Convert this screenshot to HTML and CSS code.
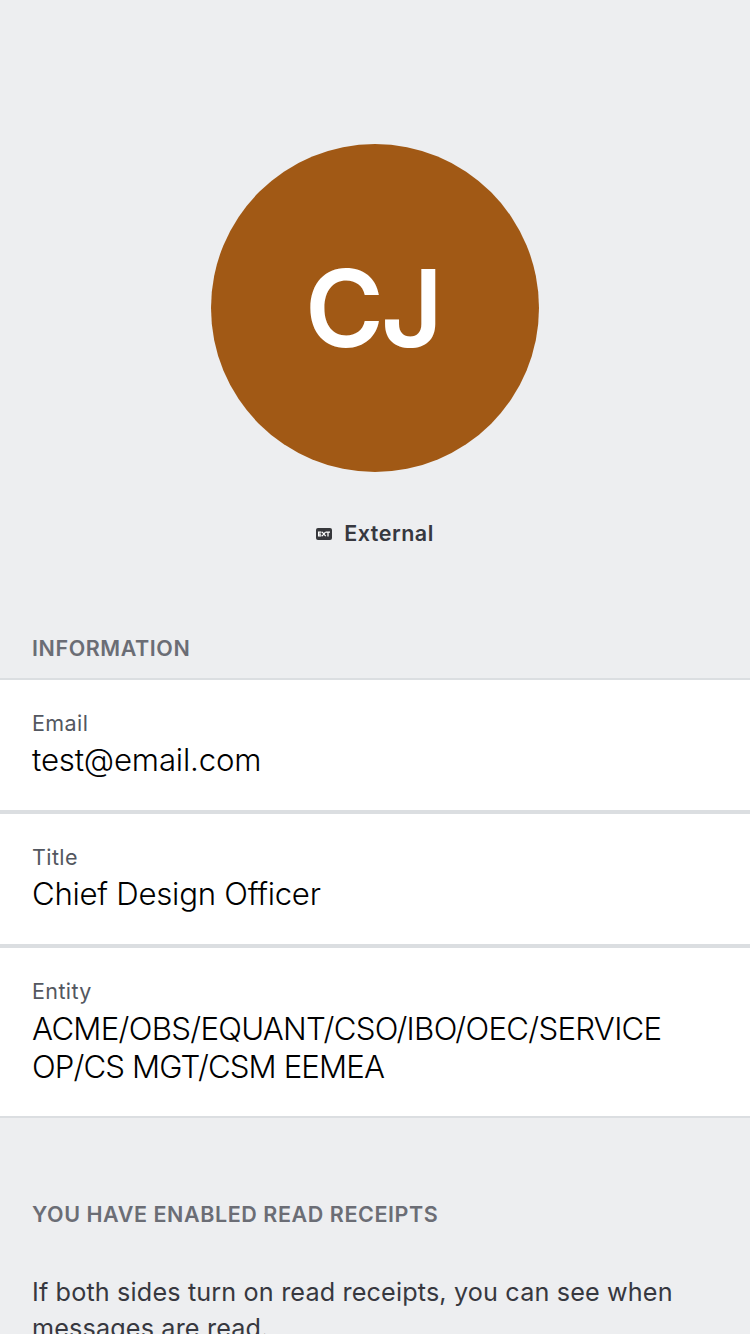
FILE: index.html
```html
<!DOCTYPE html>
<html lang="en">
<head>
<meta charset="utf-8">
<title>Profile</title>
<link rel="stylesheet" href="styles.css">
</head>
<body>
<main class="profile">
  <header class="hero">
    <div class="avatar"><span class="initials">CJ</span></div>
    <div class="status">
      <svg class="ext-icon" viewBox="0 0 16 12" aria-hidden="true">
        <rect width="16" height="12" rx="2" fill="#37383c"/>
        <path d="M5.4 4.1H2.6V7.9H5.4M2.6 6H5.1M6 3.9L9.7 8.1M9.7 3.9L6 8.1M10 4.1H14M12 4.1V8.4" fill="none" stroke="#fff" stroke-width="1.25"/>
      </svg>
      <span class="status-label">External</span>
    </div>
  </header>
  <section>
    <h2 class="heading">INFORMATION</h2>
    <dl class="fields">
      <div class="field"><dt class="label">Email</dt><dd class="value"><span class="email">test@email.com</span></dd></div>
      <div class="field"><dt class="label">Title</dt><dd class="value"><span class="job">Chief Design Officer</span></dd></div>
      <div class="field field-entity"><dt class="label">Entity</dt><dd class="value"><span class="entity">ACME/OBS/EQUANT/CSO/IBO/OEC/SERVICE</span><br><span class="entity-end">OP/CS MGT/CSM EEMEA</span></dd></div>
    </dl>
  </section>
  <section class="receipts">
    <h2 class="heading">YOU HAVE ENABLED READ RECEIPTS</h2>
    <p class="note">If both sides turn on read receipts, you can see when<br>messages are read.</p>
  </section>
</main>
</body>
</html>
```
FILE: styles.css
```css
* { box-sizing: border-box; }
body {
  margin: 0;
  background: #edeef0;
  font-family: Inter, "Liberation Sans", sans-serif;
  color: #37383f;
}
.profile { height: 1334px; overflow: hidden; }
.hero {
  height: 634px;
  padding-top: 144px;
  display: flex;
  flex-direction: column;
  align-items: center;
}
.avatar {
  width: 328px;
  height: 328px;
  border-radius: 50%;
  background: #a15915;
  color: #fff;
  display: flex;
  align-items: center;
  justify-content: center;
}
.initials {
  padding-right: 5px;
  font-size: 107px;
  font-weight: 600;
  line-height: 130px;
  letter-spacing: -3px;
}
.status {
  margin-top: 48px;
  height: 28px;
  display: flex;
  align-items: center;
  gap: 12px;
}
.ext-icon { width: 16px; height: 12px; }
.status-label {
  padding-bottom: 2px;
  font-size: 21.5px;
  font-weight: 600;
  line-height: 26px;
  letter-spacing: 0.5px;
}
.heading {
  margin: 0;
  padding-left: 32px;
  font-size: 21.5px;
  line-height: 28px;
  font-weight: 600;
  letter-spacing: 0.57px;
  color: #6b6d75;
}
.fields {
  margin: 16px 0 0;
  background: #fff;
  border-top: 2px solid #dbdee1;
  border-bottom: 2px solid #dbdee1;
}
.field { padding: 29px 32px 31px; }
.field + .field { border-top: 4px solid #dbdee1; }
.label { font-size: 21.5px; line-height: 28px; letter-spacing: 0.4px; color: #535760; }
.value {
  margin: 4px 0 0;
  font-size: 31.2px;
  line-height: 38px;
  font-weight: 300;
  color: #000;
  white-space: nowrap;
}
.field-entity { padding-bottom: 30px; }
.field-entity .value { margin-top: 5px; }
.email { letter-spacing: -0.17px; }
.job { letter-spacing: -0.27px; }
.entity { letter-spacing: -0.71px; }
.entity-end { letter-spacing: -0.88px; }
.receipts { padding-top: 82px; }
.note {
  margin: 46px 0 0 32px;
  font-size: 25.2px;
  line-height: 36px;
  letter-spacing: 0.15px;
  white-space: nowrap;
}
```
